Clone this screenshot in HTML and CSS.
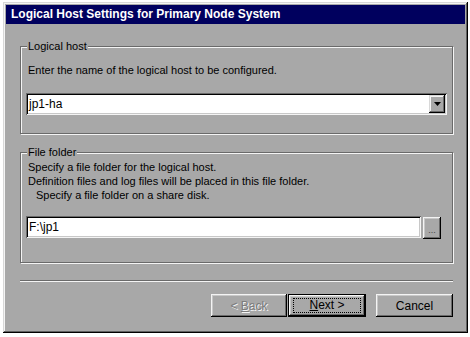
FILE: index.html
```html
<!DOCTYPE html>
<html>
<head>
<meta charset="utf-8">
<link rel="stylesheet" href="styles.css">
</head>
<body>
<div class="window">
  <div class="titlebar">Logical Host Settings for Primary Node System</div>
  <div class="content">
    <fieldset class="group g1">
      <legend>Logical host</legend>
      <p class="prompt">Enter the name of the logical host to be configured.</p>
      <div class="combo">
        <span class="combo-text">jp1-ha</span>
        <span class="combo-btn"><svg width="7" height="4" viewBox="0 0 7 4"><path d="M0 0h7L3.5 4z" fill="#000"/></svg></span>
      </div>
    </fieldset>
    <fieldset class="group g2">
      <legend>File folder</legend>
      <p class="line">Specify a file folder for the logical host.</p>
      <p class="line">Definition files and log files will be placed in this file folder.</p>
      <p class="line indent">Specify a file folder on a share disk.</p>
      <div class="path-row">
        <div class="textbox">F:\jp1</div>
        <div class="btn browse">...</div>
      </div>
    </fieldset>
    <div class="separator"></div>
    <div class="buttons">
      <div class="btn back"><span class="label">&lt; <u>B</u>ack</span></div>
      <div class="btn next"><span class="focus"><u>N</u>ext &gt;</span></div>
      <div class="btn cancel"><span class="label">Cancel</span></div>
    </div>
  </div>
</div>
</body>
</html>
```

FILE: styles.css
```css
* { box-sizing: border-box; }
body {
  margin: 0;
  background: #ffffff;
  font-family: "Liberation Sans", Arial, sans-serif;
  font-size: 11px;
  color: #000;
}
.window {
  margin: 2px 0 0 3px;
  width: 465px;
  height: 331px;
  background: #a8a8a8;
  padding: 3px 3px 0 3px;
  box-shadow: inset -1px -1px #000, inset 1px 1px #d8d8d8, inset -2px -2px #606060, inset 2px 2px #f4f4f4;
}
.titlebar {
  height: 19px;
  background: #00005e;
  color: #fff;
  font-weight: bold;
  font-size: 12px;
  line-height: 19px;
  padding-left: 5px;
  white-space: nowrap;
}
.content {
  padding: 16px 12px 0 14px;
}
.group {
  margin: 0;
  padding: 0 5px;
  border: 1px solid #6a6a6a;
  box-shadow: 1px 1px 0 #f4f4f4, inset 1px 1px 0 #f4f4f4;
  min-width: 0;
}
.group legend {
  padding: 0 1px;
  margin-left: 1px;
  line-height: 12px;
  background: #a8a8a8;
}
.prompt {
  margin: 11px 0 0 2px;
  line-height: 14px;
}
.combo {
  margin-top: 16px;
  height: 22px;
  background: #fff;
  display: flex;
  align-items: center;
  justify-content: space-between;
  padding: 2px;
  box-shadow: inset 1px 1px #6a6a6a, inset -1px -1px #f4f4f4, inset 2px 2px #000, inset -2px -2px #c8c8c8;
}
.combo-text {
  padding-left: 1px;
  font-size: 12px;
}
.combo-btn {
  width: 16px;
  height: 18px;
  background: #a8a8a8;
  display: flex;
  align-items: center;
  justify-content: center;
  box-shadow: inset -1px -1px #000, inset 1px 1px #d8d8d8, inset -2px -2px #6a6a6a, inset 2px 2px #f4f4f4;
}
.g1 { padding-bottom: 18px; }
.g2 { margin-top: 12px; padding-bottom: 23px; }
.line {
  margin: 0 0 0 2px;
  line-height: 14px;
}
.line:first-of-type { margin-top: 2px; }
.indent { padding-left: 8px; }
.path-row {
  margin-top: 14px;
  display: flex;
  align-items: flex-start;
  gap: 2px;
}
.textbox {
  width: 395px;
  height: 22px;
  background: #fff;
  padding: 4px 3px;
  font-size: 12px;
  line-height: 14px;
  box-shadow: inset 1px 1px #6a6a6a, inset -1px -1px #f4f4f4, inset 2px 2px #000, inset -2px -2px #c8c8c8;
}
.btn {
  background: #a8a8a8;
  display: flex;
  align-items: center;
  justify-content: center;
  box-shadow: inset -1px -1px #000, inset 1px 1px #f4f4f4, inset -2px -2px #6a6a6a, inset 2px 2px #c8c8c8;
}
.browse {
  margin-top: 1px;
  width: 18px;
  height: 22px;
  font-size: 9px;
  color: #444;
  padding-top: 4px;
}
.separator {
  margin-top: 17px;
  height: 2px;
  border-top: 1px solid #6a6a6a;
  border-bottom: 1px solid #f4f4f4;
}
.buttons {
  margin-top: 12px;
  display: flex;
  justify-content: flex-end;
}
.buttons .btn {
  height: 23px;
  font-size: 12px;
}
.back {
  width: 76px;
  color: #7c7c7c;
  text-shadow: 1px 1px 0 #f4f4f4;
}
.next {
  margin-left: 1px;
  width: 78px;
  border: 1px solid #000;
  box-shadow: inset -1px -1px #000, inset 1px 1px #f4f4f4, inset -2px -2px #6a6a6a, inset 2px 2px #c8c8c8;
}
.next .focus {
  width: 68px;
  height: 15px;
  line-height: 13px;
  text-align: center;
  border: 1px dotted #000;
}
.cancel {
  margin-left: 10px;
  width: 77px;
}
```
